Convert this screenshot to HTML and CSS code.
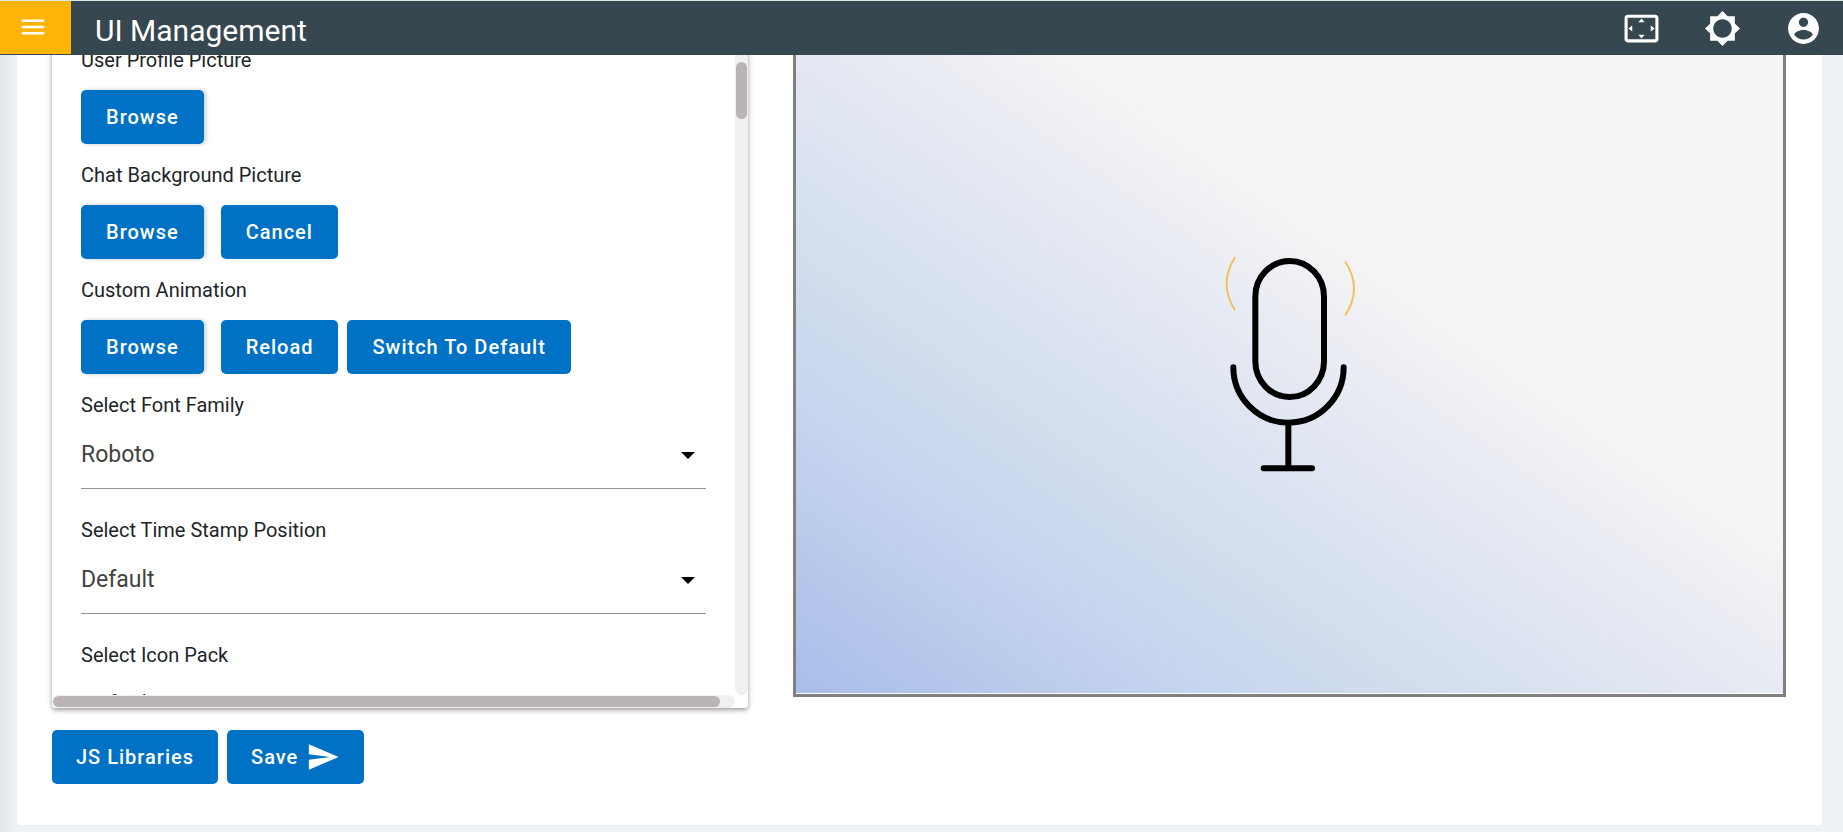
FILE: index.html
```
<!DOCTYPE html>
<html lang="en">
<head>
    <meta charset="UTF-8">
    <meta name="viewport" content="width=device-width, initial-scale=1.0">
    <title>UI Management</title>
    <link rel="stylesheet" href="styles.css">
</head>
<body>
    <header class="topbar">
        <button class="menu-btn" type="button" aria-label="Menu">
            <svg viewBox="0 0 24 24"><path d="M3 18h18v-2H3v2zm0-5h18v-2H3v2zm0-7v2h18V6H3z"/></svg>
        </button>
        <h1 class="title">UI Management</h1>
        <nav class="actions">
            <button class="icon-btn" type="button" aria-label="Fullscreen">
                <svg viewBox="0 0 24 24"><path d="M12.01 5.5L10 8h4l-1.99-2.5zM18 10v4l2.5-1.99L18 10zM6 10l-2.5 2.01L6 14v-4zm8 6h-4l2.01 2.5L14 16zm7-13H3c-1.1 0-2 .9-2 2v14c0 1.1.9 2 2 2h18c1.1 0 2-.9 2-2V5c0-1.1-.9-2-2-2zm0 16.01H3V4.99h18v14.02z"/></svg>
            </button>
            <button class="icon-btn" type="button" aria-label="Theme">
                <svg viewBox="0 0 24 24"><path d="M20 15.31L23.31 12 20 8.69V4h-4.69L12 .69 8.69 4H4v4.69L.69 12 4 15.31V20h4.69L12 23.31 15.31 20H20v-4.69zM12 18c-3.31 0-6-2.69-6-6s2.69-6 6-6 6 2.69 6 6-2.69 6-6 6z"/></svg>
            </button>
            <button class="icon-btn" type="button" aria-label="Account">
                <svg viewBox="0 0 24 24"><path d="M12 2C6.48 2 2 6.48 2 12s4.48 10 10 10 10-4.48 10-10S17.52 2 12 2zm0 3c1.66 0 3 1.34 3 3s-1.34 3-3 3-3-1.34-3-3 1.34-3 3-3zm0 14.2c-2.5 0-4.71-1.28-6-3.22.03-1.99 4-3.08 6-3.08 1.99 0 5.97 1.09 6 3.08-1.29 1.94-3.5 3.22-6 3.22z"/></svg>
            </button>
        </nav>
    </header>

    <main class="card">
        <div class="columns">
            <section class="panel">
                <form class="settings">
                    <p class="label">User Profile Picture</p>
                    <div class="btn-row">
                        <button class="btn browse" type="button">Browse</button>
                    </div>
                    <p class="label">Chat Background Picture</p>
                    <div class="btn-row">
                        <button class="btn browse" type="button">Browse</button>
                        <button class="btn" type="button">Cancel</button>
                    </div>
                    <p class="label">Custom Animation</p>
                    <div class="btn-row">
                        <button class="btn browse" type="button">Browse</button>
                        <button class="btn" type="button">Reload</button>
                        <button class="btn" type="button">Switch To Default</button>
                    </div>
                    <label class="label" for="fontFamily">Select Font Family</label>
                    <div class="select">
                        <select id="fontFamily">
                            <option>Roboto</option>
                        </select>
                    </div>
                    <label class="label" for="timePosition">Select Time Stamp Position</label>
                    <div class="select">
                        <select id="timePosition">
                            <option>Default</option>
                        </select>
                    </div>
                    <label class="label" for="iconPack">Select Icon Pack</label>
                    <div class="select">
                        <select id="iconPack">
                            <option>Default</option>
                        </select>
                    </div>
                </form>
                <div class="track track-y"><div class="thumb"></div></div>
                <div class="track track-x"><div class="thumb"></div></div>
            </section>

            <section class="preview">
                <div class="preview-bg">
                    <svg class="mic" viewBox="0 0 540 843" fill="none" stroke-linecap="round">
                        <g stroke="#000" stroke-width="18">
                            <rect x="166" y="93" width="206" height="408" rx="103" ry="107"/>
                            <path d="M100 412A165.500 166 0 0 0 431 412"/>
                            <path d="M265 578V715M191 715H336"/>
                        </g>
                        <g stroke="#f0c25f" stroke-width="6">
                            <path d="M104 83Q56 161 104 239"/>
                            <path d="M437 97Q487 176 437 254"/>
                        </g>
                    </svg>
                </div>
            </section>
        </div>

        <div class="footer-row">
            <button class="btn" type="button">JS Libraries</button>
            <button class="btn" type="button">Save
                <svg viewBox="0 0 24 24"><path d="M2.010 21L23 12 2.010 3 2 10l15 2-15 2z"/></svg>
            </button>
        </div>
    </main>
</body>
</html>
```
FILE: styles.css
```
* {
    box-sizing: border-box;
}
body {
    margin: 0;
    height: 100vh;
    padding: 48px 21px 7px 17px;
    overflow: hidden;
    font-family: Roboto, "Liberation Sans", sans-serif;
    color: #212529;
    background: linear-gradient(90deg, #e1e6e9, #eef2f6 14px);
}
button {
    font-family: inherit;
    border: none;
    cursor: pointer;
}
svg {
    display: block;
    fill: currentColor;
}

/* top bar */
.topbar {
    position: fixed;
    top: 0;
    left: 0;
    right: 0;
    z-index: 10;
    height: 55px;
    display: flex;
    align-items: center;
    color: #fff;
    background: #37474f;
    border-top: 1px solid #dbe5e4;
}
.menu-btn {
    align-self: flex-start;
    width: 71px;
    height: 53px;
    padding: 0 0 2px 18px;
    color: #fff;
    background: #ffb508;
}
.menu-btn svg {
    width: 30px;
    height: 30px;
}
.title {
    margin: 6px 0 0 24px;
    font-size: 30px;
    line-height: 36px;
    font-weight: 400;
}
.actions {
    display: flex;
    gap: 44px;
    margin-left: auto;
    padding-right: 21px;
}
.icon-btn {
    padding: 0;
    color: #fff;
    background: none;
}
.icon-btn svg {
    width: 37px;
    height: 37px;
}

/* page card */
.card {
    height: 100%;
    display: flex;
    flex-direction: column;
    padding: 0 36px 41px 35px;
    background: #fff;
    border-radius: 3px;
}
.columns {
    flex: 1;
    min-height: 0;
    display: grid;
    grid-template-columns: 696fr 993fr;
    grid-template-rows: minmax(0, 1fr);
    gap: 45px;
}
.panel {
    display: grid;
    grid-template-columns: 1fr 13px;
    grid-template-rows: minmax(0, 1fr) 13px;
    background: #fff;
    border-radius: 4px;
    box-shadow: 0 2px 5px rgba(0, 0, 0, 0.4);
}
.settings {
    overflow: hidden;
    padding: 0 29px;
}
.label {
    display: block;
    margin: 19px 0 0;
    font-size: 20px;
    line-height: 24px;
}
.label:first-child {
    margin-top: 0;
}
.btn-row {
    display: flex;
    gap: 9px;
    margin-top: 18px;
}
.btn {
    display: flex;
    align-items: center;
    height: 54px;
    padding: 0 24px;
    font-size: 20px;
    font-weight: 500;
    letter-spacing: 1px;
    color: #fff;
    background: #0072c6;
    border-radius: 5px;
}
.btn-row .btn {
    padding: 0 25px;
}
.btn svg {
    width: 34px;
    height: 34px;
    margin-left: 8px;
}
.browse {
    margin-right: 8px;
    box-shadow: 2px 0 4px rgba(0, 0, 0, 0.2);
}
.select {
    position: relative;
    margin-bottom: 29px;
}
.select select {
    appearance: none;
    display: block;
    width: 100%;
    height: 72px;
    padding: 4px 0 0;
    font-family: inherit;
    font-size: 23px;
    color: #424242;
    background: none;
    border: none;
    border-bottom: 1px solid #949494;
    border-radius: 0;
}
.select::after {
    content: "";
    position: absolute;
    top: 35px;
    right: 11px;
    border: 7px solid transparent;
    border-top-color: #000;
    border-bottom: none;
    pointer-events: none;
}

/* scroll bars */
.track {
    background: #f0f0f0;
    border-radius: 7px;
    padding: 1px;
}
.track-y {
    padding-top: 14px;
}
.thumb {
    background: #bab5b4;
    border-radius: 6px;
}
.track-y .thumb {
    height: 57px;
}
.track-x .thumb {
    width: 98%;
    height: 11px;
}

/* preview */
.preview {
    display: flex;
    margin-bottom: 11px;
    padding-bottom: 1px;
    border: 3px solid #808080;
    border-top: none;
}
.preview-bg {
    flex: 1;
    display: flex;
    align-items: center;
    justify-content: center;
    background: linear-gradient(35deg, #a8bde9, #cad7ef 24%, #cfdbed 30%, #e8ebf3 52%, #f5f5f5 63%);
}
.mic {
    width: 180px;
    fill: none;
}

.footer-row {
    display: flex;
    gap: 9px;
    margin-top: 22px;
}
```
